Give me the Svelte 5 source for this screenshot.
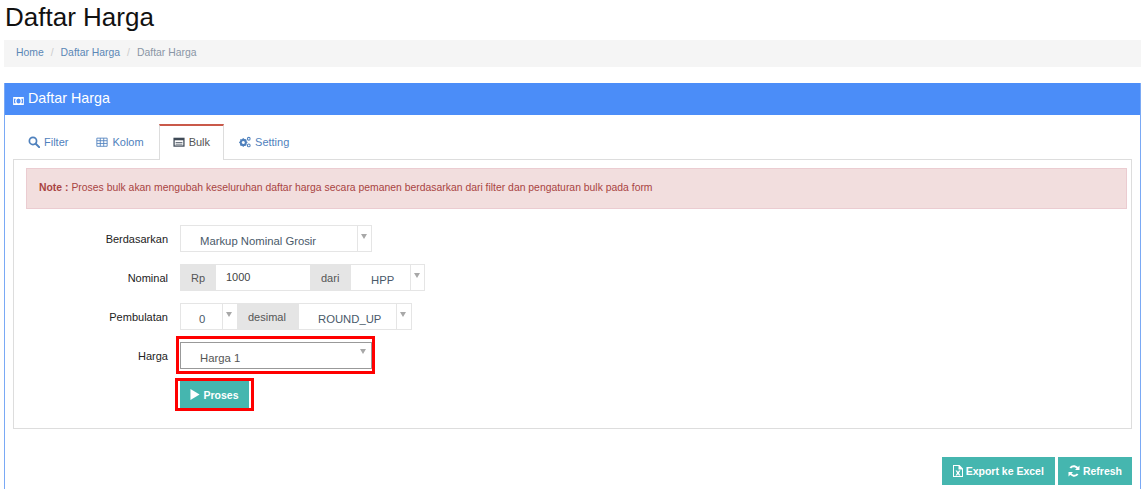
<script>
  const tabs = [
    { name: "Filter", icon: "search" },
    { name: "Kolom", icon: "table" },
    { name: "Bulk", icon: "card", active: true },
    { name: "Setting", icon: "cogs" }
  ];
</script>

{#snippet icon(kind)}
  <svg class="ico" viewBox="0 0 14 14" width="12" height="12" aria-hidden="true">
    {#if kind === "search"}
      <circle cx="5.8" cy="5.8" r="4.2" fill="none" stroke="currentColor" stroke-width="2" />
      <path d="M9 9l4 4" stroke="currentColor" stroke-width="2.4" stroke-linecap="round" />
    {:else if kind === "table"}
      <path d="M1 2.5h12v9.5H1zM1 5.5h12M1 8.7h12M5 2.5V12M9 2.5V12" fill="none" stroke="currentColor" stroke-width="1" />
    {:else if kind === "card"}
      <path d="M0.5 2h13v10.5H0.5z" fill="#3f4a57" />
      <path d="M2 5h10v6H2z" fill="#fff" />
      <path d="M3 7h8v1H3zM3 9h8v1H3z" fill="#3f4a57" />
    {:else if kind === "cogs"}
      <circle cx="5" cy="7.5" r="3" fill="none" stroke="currentColor" stroke-width="2.4" />
      <path d="M5 2.6v1.4M5 11v1.4M0.2 7.5h1.4M8.4 7.5h1.4M1.6 4.1l1 1M7.4 9.9l1 1M1.6 10.9l1-1M7.4 5.1l1-1" stroke="currentColor" stroke-width="1.5" />
      <circle cx="11.4" cy="3.2" r="1.6" fill="none" stroke="currentColor" stroke-width="1.2" />
      <circle cx="11.4" cy="11" r="1.6" fill="none" stroke="currentColor" stroke-width="1.2" />
    {/if}
  </svg>
{/snippet}

{#snippet caret()}
  <span class="caret"></span>
{/snippet}

<div class="page">
  <h1>Daftar Harga</h1>

  <ul class="breadcrumb">
    <li><a href="#home">Home</a></li>
    <li class="sep">/</li>
    <li><a href="#harga">Daftar Harga</a></li>
    <li class="sep">/</li>
    <li class="current">Daftar Harga</li>
  </ul>

  <section class="portlet">
    <header>
      <svg class="money" viewBox="0 0 12 9" width="11" height="8" aria-hidden="true">
        <path fill-rule="evenodd" d="M0 0h12v9H0zM6 1.600a2.400 2.900 0 1 0 0 5.800a2.400 2.900 0 1 0 0-5.800zM1 2v5h1.900a4.500 4.500 0 0 1 0-5zM11 2H9.100a4.500 4.500 0 0 1 0 5H11z" fill="#fff" />
      </svg>
      <span>Daftar Harga</span>
    </header>

    <div class="body">
      <ul class="tabs">
        {#each tabs as t}
          <li class:active={t.active}>
            {@render icon(t.icon)}
            <span>{t.name}</span>
          </li>
        {/each}
      </ul>

      <div class="pane">
        <div class="note"><b>Note :</b> Proses bulk akan mengubah keseluruhan daftar harga secara pemanen berdasarkan dari filter dan pengaturan bulk pada form</div>

        <div class="row">
          <span class="label">Berdasarkan</span>
          <div class="group">
            <div class="sel w-markup"><span>Markup Nominal Grosir</span></div>
            <div class="arrow">{@render caret()}</div>
          </div>
        </div>

        <div class="row">
          <span class="label">Nominal</span>
          <div class="group">
            <span class="addon rp">Rp</span>
            <div class="input">1000</div>
            <span class="addon dari">dari</span>
            <div class="sel w-hpp"><span>HPP</span></div>
            <div class="arrow">{@render caret()}</div>
          </div>
        </div>

        <div class="row">
          <span class="label">Pembulatan</span>
          <div class="group">
            <div class="sel w-zero"><span>0</span></div>
            <div class="arrow narrow">{@render caret()}</div>
            <span class="addon desimal">desimal</span>
            <div class="sel w-round"><span>ROUND_UP</span></div>
            <div class="arrow narrow">{@render caret()}</div>
          </div>
        </div>

        <div class="row harga">
          <span class="label">Harga</span>
          <div class="mark">
            <div class="harga-sel"><span>Harga 1</span>{@render caret()}</div>
          </div>
        </div>

        <div class="row submit">
          <span class="label"></span>
          <div class="mark btn-mark">
            <button type="button" class="btn">
              <svg viewBox="0 0 10 12" width="10" height="11" aria-hidden="true"><path d="M0 0l10 6-10 6z" fill="#fff" /></svg>
              Proses
            </button>
          </div>
        </div>
      </div>

      <div class="actions">
        <button type="button" class="btn export">
          <svg viewBox="0 0 10 12" width="10" height="12" aria-hidden="true">
            <path fill-rule="evenodd" d="M0 0h6.500L10 3.500V12H0zM1 1v10h8V4.500H5.500V1zM2.500 5.500h1.600L5 7l.9-1.500h1.600L5.900 8l1.600 2.500H5.900L5 9l-.9 1.500H2.500L4.100 8z" fill="#fff" />
          </svg>
          Export ke Excel
        </button>
        <button type="button" class="btn">
          <svg viewBox="0 0 12 12" width="12" height="12" aria-hidden="true">
            <path d="M10 4.300A4.400 4.400 0 0 0 2.300 3M2 7.700A4.400 4.400 0 0 0 9.700 9" fill="none" stroke="#fff" stroke-width="2" />
            <path d="M11.500 0.500v4.500H7zM0.500 11.500V7H5z" fill="#fff" />
          </svg>
          Refresh
        </button>
      </div>
    </div>
  </section>
</div>

<style>
  :global(body) {
    margin: 0;
    background: #fff;
    overflow: hidden;
  }
  .page {
    padding: 0 5px 0 4px;
    font-family: "Liberation Sans", Arial, sans-serif;
    color: #333;
    font-size: 12px;
  }
  h1 {
    margin: 0;
    padding: 2px 0 0 1px;
    height: 40px;
    box-sizing: border-box;
    font-size: 26px;
    line-height: 30px;
    font-weight: 400;
    color: #111;
  }
  .breadcrumb {
    list-style: none;
    display: flex;
    align-items: center;
    gap: 7px;
    margin: 0 0 16px;
    padding: 0 12px 2px;
    height: 27px;
    box-sizing: border-box;
    background: #f5f5f5;
    font-size: 10.4px;
  }
  .breadcrumb a {
    color: #5b87b5;
    text-decoration: none;
  }
  .sep {
    color: #ccc;
  }
  .current {
    color: #8a95a5;
  }
  .portlet {
    border: 1px solid #7aa9f5;
    border-bottom: 0;
  }
  header {
    display: flex;
    align-items: center;
    gap: 4px;
    height: 32px;
    box-sizing: border-box;
    margin-top: -1px;
    padding: 0 8px 2px;
    background: #4b8df8;
    color: #fff;
    font-size: 14.3px;
  }
  .money {
    margin-top: 5px;
  }
  .body {
    padding: 9px 8px 20px;
  }
  .tabs {
    list-style: none;
    display: flex;
    margin: 0;
    padding: 0 0 0 1px;
    height: 35px;
  }
  .tabs li {
    display: flex;
    align-items: center;
    gap: 4px;
    box-sizing: border-box;
    height: 36px;
    padding: 0 14px;
    color: #4f81bd;
    font-size: 11px;
  }
  .tabs li.active {
    position: relative;
    z-index: 1;
    margin: 0 1px;
    padding: 0 13px 2px;
    color: #555;
    background: #fff;
    border: 1px solid #ddd;
    border-top: 2px solid #c9594a;
    border-bottom: 0;
  }
  .ico {
    flex: none;
  }
  .pane {
    border: 1px solid #ddd;
    height: 270px;
    box-sizing: border-box;
    padding: 8px 4px 0 12px;
  }
  .note {
    display: flex;
    align-items: center;
    gap: 3px;
    height: 41px;
    box-sizing: border-box;
    margin-bottom: 16px;
    padding: 0 12px 2px;
    background: #f2dede;
    border: 1px solid #ebccd1;
    color: #a94442;
    font-size: 10.4px;
  }
  .row {
    display: flex;
    align-items: flex-start;
    height: 27px;
    margin-bottom: 12px;
  }
  .label {
    width: 154px;
    flex: none;
    text-align: right;
    padding-right: 12px;
    box-sizing: border-box;
    font-size: 11px;
    line-height: 28px;
    color: #222;
  }
  .group {
    display: flex;
    height: 27px;
    box-sizing: border-box;
    border: 1px solid #e5e5e5;
    color: #555;
    font-size: 11px;
  }
  .sel {
    display: flex;
    align-items: center;
    padding-top: 4px;
    box-sizing: border-box;
    border-right: 1px solid #e5e5e5;
    font-size: 11.3px;
    color: #4a5a6a;
  }
  .w-markup {
    width: 177px;
    padding-left: 19px;
  }
  .w-hpp {
    width: 60px;
    padding-left: 20px;
  }
  .w-zero {
    width: 42px;
    padding-left: 18px;
  }
  .w-round {
    width: 98px;
    padding-left: 19px;
  }
  .arrow {
    width: 13px;
    position: relative;
  }
  .arrow.narrow {
    width: 14px;
  }
  .arrow .caret {
    position: absolute;
    top: 8px;
    left: 3px;
  }
  .caret {
    display: block;
    width: 0;
    height: 0;
    border-left: 3px solid transparent;
    border-right: 3px solid transparent;
    border-top: 5px solid #a8a8a8;
  }
  .addon {
    display: flex;
    align-items: center;
    background: #e5e5e5;
    box-sizing: border-box;
    font-size: 11px;
  }
  .rp {
    width: 35px;
    padding-left: 10px;
  }
  .input {
    width: 94px;
    box-sizing: border-box;
    padding-left: 10px;
    line-height: 25px;
    color: #444;
  }
  .dari {
    width: 41px;
    padding-left: 11px;
  }
  .desimal {
    width: 62px;
    padding-left: 11px;
  }
  .row.harga {
    height: 38px;
    margin-top: -6px;
    margin-bottom: 4px;
  }
  .row.harga .label {
    width: 150px;
    padding-right: 8px;
    line-height: 40px;
  }
  .mark {
    border: 3px solid #f00;
    padding: 3px 0 0 1px;
    box-sizing: border-box;
    height: 38px;
    width: 199px;
  }
  .harga-sel {
    display: flex;
    align-items: center;
    justify-content: space-between;
    box-sizing: border-box;
    height: 27px;
    padding: 0 5px 0 19px;
    border: 1px solid #999;
    color: #555;
    font-size: 11.3px;
  }
  .harga-sel span {
    padding-top: 5px;
  }
  .harga-sel .caret {
    margin-bottom: 4px;
  }
  .row.submit {
    height: 33px;
  }
  .row.submit .label {
    width: 149px;
  }
  .btn-mark {
    width: 79px;
    height: 33px;
    padding: 0 2px;
  }
  .btn {
    display: inline-flex;
    align-items: center;
    justify-content: center;
    gap: 3px;
    height: 28px;
    margin: 0;
    padding: 0 10px;
    border: 0;
    background: #45b6af;
    color: #fff;
    font-family: inherit;
    font-size: 10.5px;
    font-weight: 700;
  }
  .btn.export {
    padding: 0 11px;
  }
  .btn-mark .btn {
    display: flex;
    width: 69px;
    height: 27px;
    padding: 0;
  }
  .actions {
    display: flex;
    justify-content: flex-end;
    gap: 3px;
    margin-top: 28px;
  }
</style>
